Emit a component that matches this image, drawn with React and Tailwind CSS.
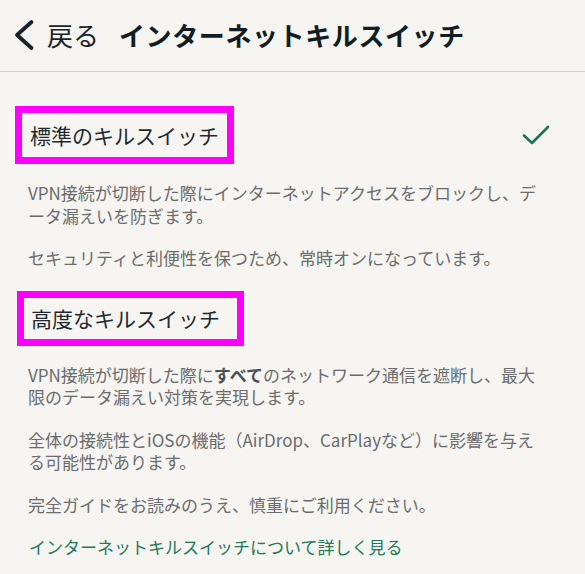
import React from "react";

const Check = () => (
  <svg width="30" height="22" viewBox="0 0 30 22" fill="none" className="mr-[19px]">
    <path d="M3 11.5l8 7.5L27 3" stroke="#1e7257" strokeWidth="2.6" strokeLinecap="round" strokeLinejoin="round" />
  </svg>
);

const Section = ({ title, checked, boxClass, children }) => (
  <section>
    <div className="flex items-center justify-between">
      <div className={`inline-block border-[7px] border-[#ff00ff] ${boxClass}`}>
        <h2 className="text-[21px] leading-[30px] text-[#1f2a30]">{title}</h2>
      </div>
      {checked && <Check />}
    </div>
    <div className="mt-[18px] pr-3 text-[17px] leading-[22.5px] text-[#6a6c6d] flex flex-col gap-[20px]">
      {children}
    </div>
  </section>
);

export default function App() {
  return (
    <div
      className="min-h-screen bg-[#f6f5f1] w-[585px] h-[574px] overflow-hidden"
      style={{ fontFamily: '"Noto Sans CJK JP", "Noto Sans", sans-serif' }}
    >
      <header className="h-[72px] border-b border-[#d3d1cc] flex items-center pl-[12px] pb-[2px]">
        <button className="flex items-center text-[#1a2329]">
          <svg width="24" height="34" viewBox="0 0 24 34" fill="none">
            <path d="M19.5 4L5 17l14.5 13" stroke="#1a2329" strokeWidth="3.8" strokeLinecap="round" strokeLinejoin="round" />
          </svg>
          <span className="ml-[11px] text-[26px] leading-none">戻る</span>
        </button>
        <h1 className="ml-[20px] text-[26px] tracking-[0.6px] font-bold leading-none text-[#111c23]">インターネットキルスイッチ</h1>
      </header>

      <main className="pt-[34px] px-[15px]">
        <Section title="標準のキルスイッチ" checked boxClass="px-[8px] pt-[7px] pb-[7px]">
          <p className="pl-[13px]">
            VPN接続が切断した際にインターネットアクセスをブロックし、デ
            <br />
            ータ漏えいを防ぎます。
          </p>
          <p className="pl-[13px]">セキュリティと利便性を保つため、常時オンになっています。</p>
        </Section>

        <div className="mt-[21px] pl-[2px]">
          <Section title="高度なキルスイッチ" boxClass="pl-[7px] pr-[17px] pt-[5px] pb-[6px]">
            <p className="pl-[11px]">
              VPN接続が切断した際に<span className="font-bold text-[#4e5153]">すべて</span>のネットワーク通信を遮断し、最大
              <br />
              限のデータ漏えい対策を実現します。
            </p>
            <p className="pl-[11px]">
              全体の接続性とiOSの機能（AirDrop、CarPlayなど）に影響を与え
              <br />
              る可能性があります。
            </p>
            <p className="pl-[11px]">完全ガイドをお読みのうえ、慎重にご利用ください。</p>
            <p className="pl-[12px]">
              <a href="#" className="text-[#217a5a]">インターネットキルスイッチについて詳しく見る</a>
            </p>
          </Section>
        </div>
      </main>
    </div>
  );
}
